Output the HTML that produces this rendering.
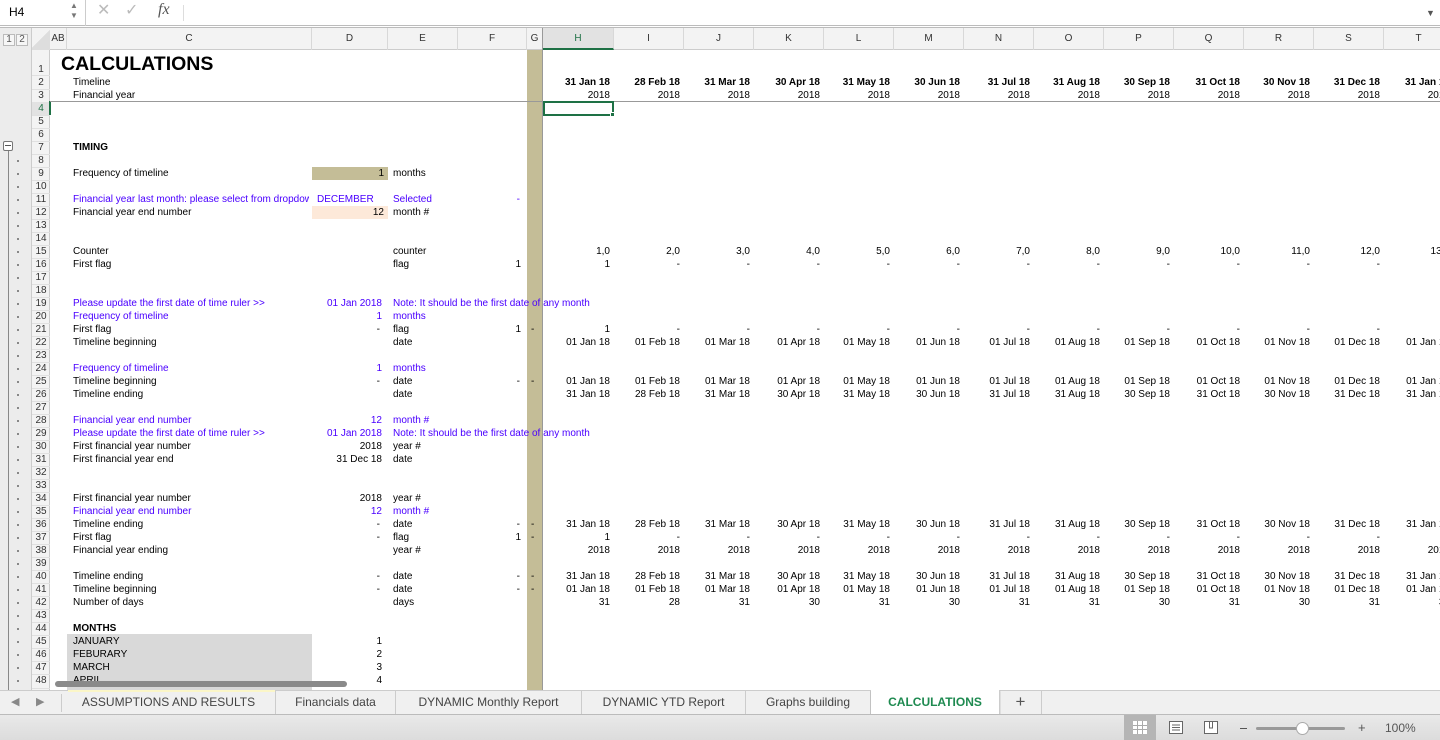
<!DOCTYPE html>
<html><head><meta charset="utf-8"><style>
*{box-sizing:border-box;margin:0;padding:0}
body{width:1440px;height:740px;overflow:hidden;position:relative;background:#fff;font-family:"Liberation Sans",Arial,sans-serif;font-size:10px;color:#000}
.a{position:absolute;white-space:nowrap;line-height:13px}
.b{color:#4a00ff}
.r{text-align:right}
.row{position:absolute;left:543px;height:13px;line-height:13px;white-space:nowrap;display:flex}
.row span{display:inline-block;width:70px;text-align:right;padding-right:4px;flex:none}
.row span:first-child{width:71px}
.ch{position:absolute;top:28px;height:22px;line-height:22px;text-align:center;color:#333;font-size:10px;border-right:1px solid #d8d8d8}
.rn{position:absolute;left:32px;width:18px;text-align:center;font-size:10px;color:#333;line-height:13px;border-bottom:1px solid #e0e0e0}
.dot{position:absolute;left:17px;width:2px;height:2px;background:#888}
.tab{position:absolute;top:690px;height:24px;line-height:24px;text-align:center;font-size:12px;color:#444;border-right:1px solid #ccc}
#w{position:absolute;left:0;top:1px;width:1440px;height:689px;overflow:visible}
</style></head><body>
<!-- formula bar -->
<div style="position:absolute;left:0;top:0;width:1440px;height:26px;background:#fff;border-bottom:1px solid #bbb"></div>
<div style="position:absolute;left:0;top:27px;width:1440px;height:1px;background:#bbb"></div>
<div class="a" style="left:9px;top:6px;font-size:12px">H4</div>
<div class="a" style="left:70px;top:1px;font-size:8px;color:#777;line-height:10px">▲<br>▼</div>
<div style="position:absolute;left:85px;top:0;width:1px;height:26px;background:#ccc"></div>
<div class="a" style="left:97px;top:4px;font-size:16px;color:#bbb">✕</div>
<div class="a" style="left:125px;top:4px;font-size:16px;color:#bbb">✓</div>
<div class="a" style="left:158px;top:3px;font-size:16px;font-family:'Liberation Serif',serif;font-style:italic;color:#555">fx</div>
<div style="position:absolute;left:183px;top:5px;width:1px;height:16px;background:#ddd"></div>
<div class="a" style="left:1426px;top:7px;font-size:9px;color:#555">▼</div>
<!-- left gutter -->
<div style="position:absolute;left:0;top:28px;width:32px;height:662px;background:#ececec;border-right:1px solid #ccc"></div>
<div class="a" style="left:3px;top:34px;width:12px;height:12px;border:1px solid #bbb;background:#f6f6f6;text-align:center;line-height:10px;color:#555">1</div>
<div class="a" style="left:16px;top:34px;width:12px;height:12px;border:1px solid #bbb;background:#f6f6f6;text-align:center;line-height:10px;color:#555">2</div>
<!-- row number col -->
<div style="position:absolute;left:32px;top:50px;width:18px;height:640px;background:#f3f3f3;border-right:1px solid #ccc"></div>
<!-- column headers -->
<div style="position:absolute;left:32px;top:28px;width:1408px;height:22px;background:#f3f3f3;border-bottom:1px solid #ccc"></div>
<div style="position:absolute;left:32px;top:28px;width:18px;height:22px;background:linear-gradient(135deg,#f3f3f3 50%,#ddd 50%)"></div>
<div class="ch" style="left:50px;width:17px">AB</div>
<div class="ch" style="left:67px;width:245px">C</div>
<div class="ch" style="left:312px;width:76px">D</div>
<div class="ch" style="left:388px;width:70px">E</div>
<div class="ch" style="left:458px;width:69px">F</div>
<div class="ch" style="left:527px;width:16px;border-right:1px solid #999">G</div>
<div class="ch" style="left:543px;width:71px;color:#1e7145;background:#e2e2e2;border-bottom:2px solid #1e7145">H</div>
<div class="ch" style="left:614px;width:70px">I</div>
<div class="ch" style="left:684px;width:70px">J</div>
<div class="ch" style="left:754px;width:70px">K</div>
<div class="ch" style="left:824px;width:70px">L</div>
<div class="ch" style="left:894px;width:70px">M</div>
<div class="ch" style="left:964px;width:70px">N</div>
<div class="ch" style="left:1034px;width:70px">O</div>
<div class="ch" style="left:1104px;width:70px">P</div>
<div class="ch" style="left:1174px;width:70px">Q</div>
<div class="ch" style="left:1244px;width:70px">R</div>
<div class="ch" style="left:1314px;width:70px">S</div>
<div class="ch" style="left:1384px;width:70px">T</div>
<!-- G col -->
<div style="position:absolute;left:527px;top:50px;width:16px;height:640px;background:#c4bd97;border-right:1px solid #999"></div>
<div id="w">
<div style="position:absolute;left:3px;top:140px;width:10px;height:10px;border:1px solid #777;border-radius:2px;background:#fff"></div>
<div style="position:absolute;left:5px;top:144px;width:6px;height:1px;background:#555"></div>
<div style="position:absolute;left:8px;top:150px;width:1px;height:539px;background:#888"></div>
<!-- row numbers -->
<div class="rn" style="top:56px;height:19px;line-height:26px">1</div>
<div class="rn" style="top:75px">2</div><div class="rn" style="top:88px">3</div>
<div class="rn" style="top:101px;color:#1e7145;background:#e2e2e2">4</div>
<div class="rn" style="top:114px">5</div><div class="rn" style="top:127px">6</div><div class="rn" style="top:140px">7</div><div class="rn" style="top:153px">8</div><div class="rn" style="top:166px">9</div><div class="rn" style="top:179px">10</div><div class="rn" style="top:192px">11</div><div class="rn" style="top:205px">12</div><div class="rn" style="top:218px">13</div><div class="rn" style="top:231px">14</div><div class="rn" style="top:244px">15</div><div class="rn" style="top:257px">16</div><div class="rn" style="top:270px">17</div><div class="rn" style="top:283px">18</div><div class="rn" style="top:296px">19</div><div class="rn" style="top:309px">20</div><div class="rn" style="top:322px">21</div><div class="rn" style="top:335px">22</div><div class="rn" style="top:348px">23</div><div class="rn" style="top:361px">24</div><div class="rn" style="top:374px">25</div><div class="rn" style="top:387px">26</div><div class="rn" style="top:400px">27</div><div class="rn" style="top:413px">28</div><div class="rn" style="top:426px">29</div><div class="rn" style="top:439px">30</div><div class="rn" style="top:452px">31</div><div class="rn" style="top:465px">32</div><div class="rn" style="top:478px">33</div><div class="rn" style="top:491px">34</div><div class="rn" style="top:504px">35</div><div class="rn" style="top:517px">36</div><div class="rn" style="top:530px">37</div><div class="rn" style="top:543px">38</div><div class="rn" style="top:556px">39</div><div class="rn" style="top:569px">40</div><div class="rn" style="top:582px">41</div><div class="rn" style="top:595px">42</div><div class="rn" style="top:608px">43</div><div class="rn" style="top:621px">44</div><div class="rn" style="top:634px">45</div><div class="rn" style="top:647px">46</div><div class="rn" style="top:660px">47</div><div class="rn" style="top:673px;height:15px">48</div>
<div style="position:absolute;left:49px;top:100px;width:2px;height:14px;background:#1e7145"></div>
<!-- outline dots -->
<div class="dot" style="top:159px"></div><div class="dot" style="top:172px"></div><div class="dot" style="top:185px"></div><div class="dot" style="top:198px"></div><div class="dot" style="top:211px"></div><div class="dot" style="top:224px"></div><div class="dot" style="top:237px"></div><div class="dot" style="top:250px"></div><div class="dot" style="top:263px"></div><div class="dot" style="top:276px"></div><div class="dot" style="top:289px"></div><div class="dot" style="top:302px"></div><div class="dot" style="top:315px"></div><div class="dot" style="top:328px"></div><div class="dot" style="top:341px"></div><div class="dot" style="top:354px"></div><div class="dot" style="top:367px"></div><div class="dot" style="top:380px"></div><div class="dot" style="top:393px"></div><div class="dot" style="top:406px"></div><div class="dot" style="top:419px"></div><div class="dot" style="top:432px"></div><div class="dot" style="top:445px"></div><div class="dot" style="top:458px"></div><div class="dot" style="top:471px"></div><div class="dot" style="top:484px"></div><div class="dot" style="top:497px"></div><div class="dot" style="top:510px"></div><div class="dot" style="top:523px"></div><div class="dot" style="top:536px"></div><div class="dot" style="top:549px"></div><div class="dot" style="top:562px"></div><div class="dot" style="top:575px"></div><div class="dot" style="top:588px"></div><div class="dot" style="top:601px"></div><div class="dot" style="top:614px"></div><div class="dot" style="top:627px"></div><div class="dot" style="top:640px"></div><div class="dot" style="top:653px"></div><div class="dot" style="top:666px"></div><div class="dot" style="top:679px"></div>
<!-- freeze line & selection -->
<div style="position:absolute;left:50px;top:100px;width:1390px;height:1px;background:#999"></div>
<div style="position:absolute;left:543px;top:100px;width:71px;height:15px;border:2px solid #1e7145"></div>
<div style="position:absolute;left:610px;top:111px;width:5px;height:5px;background:#1e7145;border:1px solid #fff"></div>
<!-- fills -->
<div style="position:absolute;left:312px;top:166px;width:76px;height:13px;background:#c4bd97"></div>
<div style="position:absolute;left:312px;top:205px;width:76px;height:13px;background:#fde9d9"></div>
<div style="position:absolute;left:67px;top:633px;width:245px;height:56px;background:#d9d9d9"></div>
<!-- left text -->
<div class="a" style="left:61px;top:51px;font-size:19.5px;font-weight:bold;line-height:24px">CALCULATIONS</div>
<div class="a" style="left:73px;top:75px">Timeline</div>
<div class="a" style="left:73px;top:88px">Financial year</div>
<div class="a" style="left:73px;top:140px;font-weight:bold">TIMING</div>
<div class="a" style="left:73px;top:166px">Frequency of timeline</div>
<div class="a r" style="left:312px;top:166px;width:72px">1</div><div class="a" style="left:393px;top:166px">months</div>
<div class="a b" style="left:73px;top:192px;width:236px;overflow:hidden">Financial year last month: please select from dropdown</div>
<div class="a b" style="left:317px;top:192px">DECEMBER</div><div class="a b" style="left:393px;top:192px">Selected</div><div class="a b r" style="left:458px;top:192px;width:62px">-</div>
<div class="a" style="left:73px;top:205px">Financial year end number</div>
<div class="a r" style="left:312px;top:205px;width:72px">12</div><div class="a" style="left:393px;top:205px">month #</div>
<div class="a" style="left:73px;top:244px">Counter</div><div class="a" style="left:393px;top:244px">counter</div>
<div class="a" style="left:73px;top:257px">First flag</div><div class="a" style="left:393px;top:257px">flag</div><div class="a r" style="left:458px;top:257px;width:63px">1</div>
<div class="a b" style="left:73px;top:296px">Please update the first date of time ruler &gt;&gt;</div>
<div class="a b r" style="left:312px;top:296px;width:70px">01 Jan 2018</div><div class="a b" style="left:393px;top:296px">Note: It should be the first date of any month</div>
<div class="a b" style="left:73px;top:309px">Frequency of timeline</div><div class="a b r" style="left:312px;top:309px;width:70px">1</div><div class="a b" style="left:393px;top:309px">months</div>
<div class="a" style="left:73px;top:322px">First flag</div><div class="a r" style="left:312px;top:322px;width:68px">-</div><div class="a" style="left:393px;top:322px">flag</div><div class="a r" style="left:458px;top:322px;width:63px">1</div><div class="a" style="left:531px;top:322px">-</div>
<div class="a" style="left:73px;top:335px">Timeline beginning</div><div class="a" style="left:393px;top:335px">date</div>
<div class="a b" style="left:73px;top:361px">Frequency of timeline</div><div class="a b r" style="left:312px;top:361px;width:70px">1</div><div class="a b" style="left:393px;top:361px">months</div>
<div class="a" style="left:73px;top:374px">Timeline beginning</div><div class="a r" style="left:312px;top:374px;width:68px">-</div><div class="a" style="left:393px;top:374px">date</div><div class="a r" style="left:458px;top:374px;width:62px">-</div><div class="a" style="left:531px;top:374px">-</div>
<div class="a" style="left:73px;top:387px">Timeline ending</div><div class="a" style="left:393px;top:387px">date</div>
<div class="a b" style="left:73px;top:413px">Financial year end number</div><div class="a b r" style="left:312px;top:413px;width:70px">12</div><div class="a b" style="left:393px;top:413px">month #</div>
<div class="a b" style="left:73px;top:426px">Please update the first date of time ruler &gt;&gt;</div><div class="a b r" style="left:312px;top:426px;width:70px">01 Jan 2018</div><div class="a b" style="left:393px;top:426px">Note: It should be the first date of any month</div>
<div class="a" style="left:73px;top:439px">First financial year number</div><div class="a r" style="left:312px;top:439px;width:70px">2018</div><div class="a" style="left:393px;top:439px">year #</div>
<div class="a" style="left:73px;top:452px">First financial year end</div><div class="a r" style="left:312px;top:452px;width:70px">31 Dec 18</div><div class="a" style="left:393px;top:452px">date</div>
<div class="a" style="left:73px;top:491px">First financial year number</div><div class="a r" style="left:312px;top:491px;width:70px">2018</div><div class="a" style="left:393px;top:491px">year #</div>
<div class="a b" style="left:73px;top:504px">Financial year end number</div><div class="a b r" style="left:312px;top:504px;width:70px">12</div><div class="a b" style="left:393px;top:504px">month #</div>
<div class="a" style="left:73px;top:517px">Timeline ending</div><div class="a r" style="left:312px;top:517px;width:68px">-</div><div class="a" style="left:393px;top:517px">date</div><div class="a r" style="left:458px;top:517px;width:62px">-</div><div class="a" style="left:531px;top:517px">-</div>
<div class="a" style="left:73px;top:530px">First flag</div><div class="a r" style="left:312px;top:530px;width:68px">-</div><div class="a" style="left:393px;top:530px">flag</div><div class="a r" style="left:458px;top:530px;width:63px">1</div><div class="a" style="left:531px;top:530px">-</div>
<div class="a" style="left:73px;top:543px">Financial year ending</div><div class="a" style="left:393px;top:543px">year #</div>
<div class="a" style="left:73px;top:569px">Timeline ending</div><div class="a r" style="left:312px;top:569px;width:68px">-</div><div class="a" style="left:393px;top:569px">date</div><div class="a r" style="left:458px;top:569px;width:62px">-</div><div class="a" style="left:531px;top:569px">-</div>
<div class="a" style="left:73px;top:582px">Timeline beginning</div><div class="a r" style="left:312px;top:582px;width:68px">-</div><div class="a" style="left:393px;top:582px">date</div><div class="a r" style="left:458px;top:582px;width:62px">-</div><div class="a" style="left:531px;top:582px">-</div>
<div class="a" style="left:73px;top:595px">Number of days</div><div class="a" style="left:393px;top:595px">days</div>
<div class="a" style="left:73px;top:621px;font-weight:bold">MONTHS</div>
<div class="a" style="left:73px;top:634px">JANUARY</div><div class="a r" style="left:312px;top:634px;width:70px">1</div>
<div class="a" style="left:73px;top:647px">FEBURARY</div><div class="a r" style="left:312px;top:647px;width:70px">2</div>
<div class="a" style="left:73px;top:660px">MARCH</div><div class="a r" style="left:312px;top:660px;width:70px">3</div>
<div class="a" style="left:73px;top:673px">APRIL</div><div class="a r" style="left:312px;top:673px;width:70px">4</div>
<!-- data rows -->
<div class="row" style="top:75px;font-weight:bold"><span>31 Jan 18</span><span>28 Feb 18</span><span>31 Mar 18</span><span>30 Apr 18</span><span>31 May 18</span><span>30 Jun 18</span><span>31 Jul 18</span><span>31 Aug 18</span><span>30 Sep 18</span><span>31 Oct 18</span><span>30 Nov 18</span><span>31 Dec 18</span><span>31 Jan 19</span></div>
<div class="row" style="top:88px"><span>2018</span><span>2018</span><span>2018</span><span>2018</span><span>2018</span><span>2018</span><span>2018</span><span>2018</span><span>2018</span><span>2018</span><span>2018</span><span>2018</span><span>2019</span></div>
<div class="row" style="top:244px"><span>1,0</span><span>2,0</span><span>3,0</span><span>4,0</span><span>5,0</span><span>6,0</span><span>7,0</span><span>8,0</span><span>9,0</span><span>10,0</span><span>11,0</span><span>12,0</span><span>13,0</span></div>
<div class="row" style="top:257px"><span>1</span><span>-</span><span>-</span><span>-</span><span>-</span><span>-</span><span>-</span><span>-</span><span>-</span><span>-</span><span>-</span><span>-</span><span>-</span></div>
<div class="row" style="top:322px"><span>1</span><span>-</span><span>-</span><span>-</span><span>-</span><span>-</span><span>-</span><span>-</span><span>-</span><span>-</span><span>-</span><span>-</span><span>-</span></div>
<div class="row" style="top:335px"><span>01 Jan 18</span><span>01 Feb 18</span><span>01 Mar 18</span><span>01 Apr 18</span><span>01 May 18</span><span>01 Jun 18</span><span>01 Jul 18</span><span>01 Aug 18</span><span>01 Sep 18</span><span>01 Oct 18</span><span>01 Nov 18</span><span>01 Dec 18</span><span>01 Jan 19</span></div>
<div class="row" style="top:374px"><span>01 Jan 18</span><span>01 Feb 18</span><span>01 Mar 18</span><span>01 Apr 18</span><span>01 May 18</span><span>01 Jun 18</span><span>01 Jul 18</span><span>01 Aug 18</span><span>01 Sep 18</span><span>01 Oct 18</span><span>01 Nov 18</span><span>01 Dec 18</span><span>01 Jan 19</span></div>
<div class="row" style="top:387px"><span>31 Jan 18</span><span>28 Feb 18</span><span>31 Mar 18</span><span>30 Apr 18</span><span>31 May 18</span><span>30 Jun 18</span><span>31 Jul 18</span><span>31 Aug 18</span><span>30 Sep 18</span><span>31 Oct 18</span><span>30 Nov 18</span><span>31 Dec 18</span><span>31 Jan 19</span></div>
<div class="row" style="top:517px"><span>31 Jan 18</span><span>28 Feb 18</span><span>31 Mar 18</span><span>30 Apr 18</span><span>31 May 18</span><span>30 Jun 18</span><span>31 Jul 18</span><span>31 Aug 18</span><span>30 Sep 18</span><span>31 Oct 18</span><span>30 Nov 18</span><span>31 Dec 18</span><span>31 Jan 19</span></div>
<div class="row" style="top:530px"><span>1</span><span>-</span><span>-</span><span>-</span><span>-</span><span>-</span><span>-</span><span>-</span><span>-</span><span>-</span><span>-</span><span>-</span><span>-</span></div>
<div class="row" style="top:543px"><span>2018</span><span>2018</span><span>2018</span><span>2018</span><span>2018</span><span>2018</span><span>2018</span><span>2018</span><span>2018</span><span>2018</span><span>2018</span><span>2018</span><span>2019</span></div>
<div class="row" style="top:569px"><span>31 Jan 18</span><span>28 Feb 18</span><span>31 Mar 18</span><span>30 Apr 18</span><span>31 May 18</span><span>30 Jun 18</span><span>31 Jul 18</span><span>31 Aug 18</span><span>30 Sep 18</span><span>31 Oct 18</span><span>30 Nov 18</span><span>31 Dec 18</span><span>31 Jan 19</span></div>
<div class="row" style="top:582px"><span>01 Jan 18</span><span>01 Feb 18</span><span>01 Mar 18</span><span>01 Apr 18</span><span>01 May 18</span><span>01 Jun 18</span><span>01 Jul 18</span><span>01 Aug 18</span><span>01 Sep 18</span><span>01 Oct 18</span><span>01 Nov 18</span><span>01 Dec 18</span><span>01 Jan 19</span></div>
<div class="row" style="top:595px"><span>31</span><span>28</span><span>31</span><span>30</span><span>31</span><span>30</span><span>31</span><span>31</span><span>30</span><span>31</span><span>30</span><span>31</span><span>31</span></div>
</div>
<div style="position:absolute;left:55px;top:681px;width:292px;height:6px;border-radius:3px;background:#8a8a8a"></div>
<!-- tab bar -->
<div style="position:absolute;left:0;top:690px;width:1440px;height:24px;background:#f0f0f0;border-top:1px solid #ccc"></div>
<div style="position:absolute;left:68px;top:690px;width:207px;height:2px;background:#fbf6c8"></div>
<div class="a" style="left:11px;top:696px;font-size:11px;color:#888">◀</div>
<div class="a" style="left:36px;top:696px;font-size:11px;color:#888">▶</div>
<div style="position:absolute;left:61px;top:694px;width:1px;height:18px;background:#ccc"></div>
<div class="tab" style="left:62px;width:214px">ASSUMPTIONS AND RESULTS</div>
<div class="tab" style="left:276px;width:120px">Financials data</div>
<div class="tab" style="left:396px;width:186px">DYNAMIC Monthly Report</div>
<div class="tab" style="left:582px;width:164px">DYNAMIC YTD Report</div>
<div class="tab" style="left:746px;width:125px">Graphs building</div>
<div class="tab" style="left:871px;width:129px;background:#fff;color:#1e8a50;font-weight:bold;box-shadow:0 1px 1px #999">CALCULATIONS</div>
<div class="tab" style="left:1000px;width:42px;font-size:17px;color:#555">+</div>
<!-- status bar -->
<div style="position:absolute;left:0;top:714px;width:1440px;height:26px;background:linear-gradient(#e9e9e9,#dcdcdc);border-top:1px solid #bbb"></div>
<div style="position:absolute;left:1124px;top:715px;width:32px;height:25px;background:#b5b5b5"></div>
<svg style="position:absolute;left:1133px;top:721px" width="14" height="13"><rect x=".5" y=".5" width="13" height="12" fill="#fff" stroke="#fff"/><path d="M0 4.5H14M0 8.5H14M4.5 0V13M9.5 0V13" stroke="#aaa"/></svg>
<svg style="position:absolute;left:1169px;top:721px" width="14" height="13"><rect x=".5" y=".5" width="13" height="12" fill="#fff" stroke="#666"/><path d="M3 4H11M3 6.5H11M3 9H11" stroke="#666"/></svg>
<svg style="position:absolute;left:1204px;top:721px" width="14" height="13"><rect x=".5" y=".5" width="13" height="12" fill="#fff" stroke="#666"/><path d="M5.5 0V7H8.5V0" stroke="#666" fill="none"/></svg>
<div style="position:absolute;left:1240px;top:728px;width:7px;height:1px;background:#555"></div>
<div style="position:absolute;left:1256px;top:727px;width:89px;height:3px;border-radius:2px;background:#999"></div>
<div style="position:absolute;left:1296px;top:722px;width:13px;height:13px;border-radius:50%;background:#fff;border:1px solid #aaa"></div>
<div class="a" style="left:1358px;top:721px;font-size:13px;color:#555">+</div>
<div class="a" style="left:1385px;top:722px;font-size:12px;color:#555">100%</div>
</body></html>
